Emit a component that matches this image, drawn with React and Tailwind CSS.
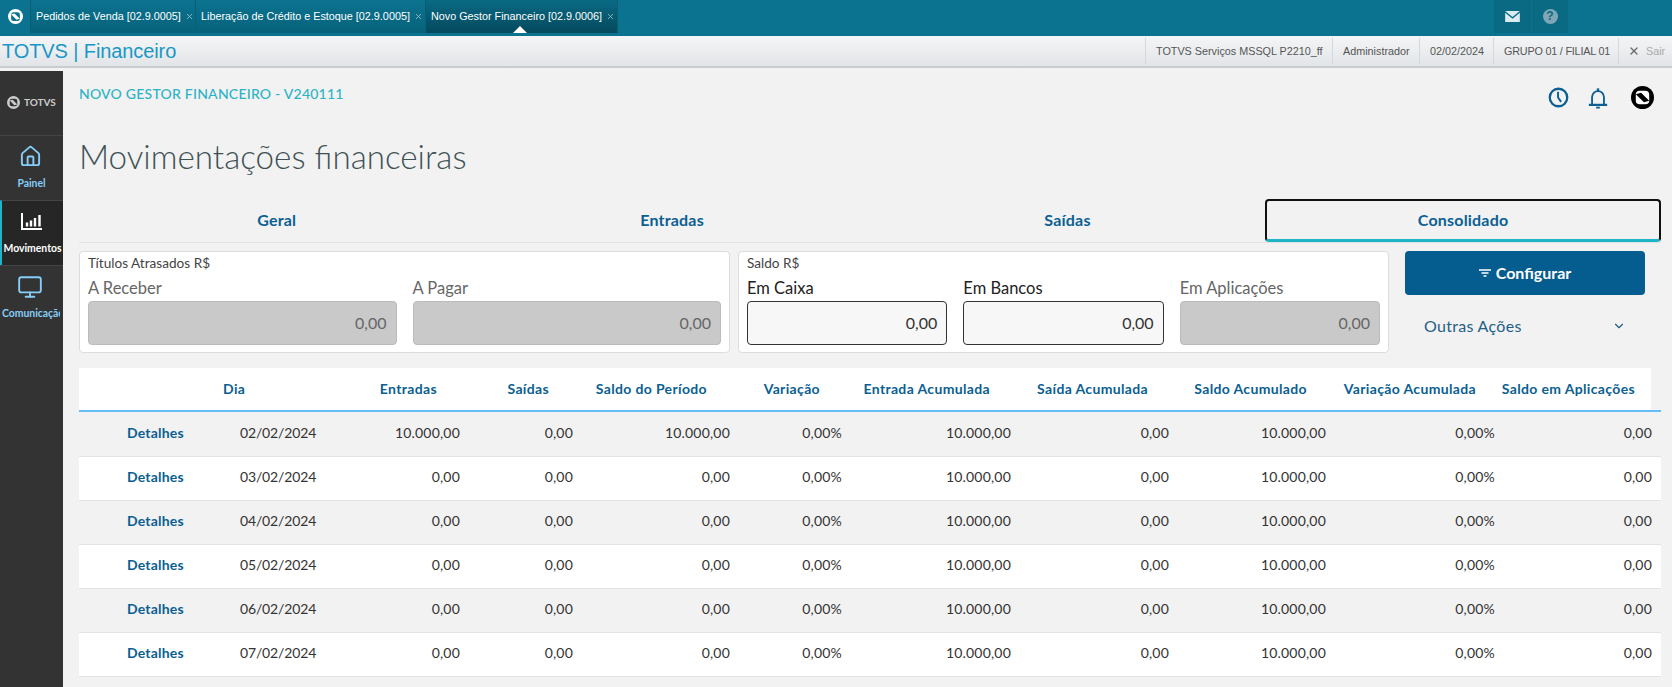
import React from "react";
import { House, Monitor, X, ChevronDown } from "lucide-react";

const tabs = [
  { label: "Pedidos de Venda [02.9.0005]", width: "w-[165px]" },
  { label: "Liberação de Crédito e Estoque [02.9.0005]", width: "w-[230px]" },
  { label: "Novo Gestor Financeiro [02.9.0006]", width: "w-[192px]", active: true },
];

const infoCells = [
  { text: "TOTVS Serviços MSSQL P2210_ff", width: "w-[187px]" },
  { text: "Administrador", width: "w-[87px]" },
  { text: "02/02/2024", width: "w-[74px]" },
  { text: "GRUPO 01 / FILIAL 01", width: "w-[125px]", tight: true },
];

const headers = ["Entradas", "Saídas", "Saldo do Período", "Variação", "Entrada Acumulada", "Saída Acumulada", "Saldo Acumulado", "Variação Acumulada", "Saldo em Aplicações"];

const rows = [
  { day: "02/02/2024", in: "10.000,00", saldo: "10.000,00" },
  { day: "03/02/2024", in: "0,00", saldo: "0,00" },
  { day: "04/02/2024", in: "0,00", saldo: "0,00" },
  { day: "05/02/2024", in: "0,00", saldo: "0,00" },
  { day: "06/02/2024", in: "0,00", saldo: "0,00" },
  { day: "07/02/2024", in: "0,00", saldo: "0,00" },
];

const TotvsLogo = ({ className, ring = "#000", inner = "#fff" }) => (
  <svg viewBox="0 0 24 24" className={className}>
    <circle cx="12" cy="12" r="12" fill={ring} />
    <rect x="5" y="5" width="14" height="14" rx="4" fill={inner} />
    <path d="M5 8.5 L10.5 7 L19 15.5 L13.5 17 Z" fill={ring} />
  </svg>
);

const BarsIcon = ({ className }) => (
  <svg viewBox="0 0 21 17" className={className} fill="none" stroke="currentColor" strokeWidth="2">
    <path d="M1 0v16h20" />
    <path d="M6 9.5v4M10 7.5v6M14 5v8.5M18.5 2v11.5" strokeWidth="2.4" />
  </svg>
);

const MailIcon = ({ className }) => (
  <svg viewBox="0 0 16 12" className={className}>
    <path d="M0 0h16L8 6.5z" fill="#dcecf1" />
    <path d="M0 2v10h16V2L8 8.5z" fill="#dcecf1" />
  </svg>
);

const ClockIcon = ({ className }) => (
  <svg viewBox="0 0 24 24" className={className} fill="none" stroke="currentColor" strokeWidth="2.6">
    <circle cx="12" cy="12" r="10" />
    <path d="M11.5 5.5V12l3.5 5" strokeWidth="2.2" />
  </svg>
);

const BellIcon = ({ className }) => (
  <svg viewBox="0 0 24 24" className={className} fill="none" stroke="currentColor" strokeWidth="2">
    <path d="M5.5 18.5V11a6.5 6.5 0 0 1 13 0v7.5" />
    <path d="M12 1.5v3" strokeWidth="2.6" />
    <path d="M2 19.5h20" strokeWidth="2.4" />
    <path d="M10 22.5h4" strokeWidth="2" />
  </svg>
);

const Field = ({ label, disabled }) => (
  <div className="flex-1">
    <div className={`h-[25px] text-[16.5px] leading-[24px] ${disabled ? "text-[#666]" : "text-[#222]"}`}>{label}</div>
    <div className={`h-[44px] rounded border flex items-center justify-end pr-[9px] text-[16px] ${disabled ? "bg-[#c9c9c9] border-[#bbb] text-[#666]" : "bg-[#f7f7f7] border-[#333] text-[#333]"}`}>
      0,00
    </div>
  </div>
);

const Panel = ({ title, children }) => (
  <div className="w-[651px] h-[102px] bg-white border border-[#ddd] rounded px-2">
    <div className="h-[24px] text-[13.6px] leading-[23px] text-[#444]">{title}</div>
    <div className="flex gap-4">{children}</div>
  </div>
);

const SideItem = ({ icon, label, active, clip }) => (
  <div className={`h-[65px] border-t border-[#444] flex flex-col items-center overflow-hidden ${active ? "bg-[#262626] border-l-2 border-l-[#1fb5c9] text-white" : "text-[#86cdf7]"}`}>
    <div className="h-[39px] flex items-center justify-center pr-[3px] mt-px">{icon}</div>
    <div className={`text-[10.4px] font-bold leading-[14px] whitespace-nowrap ${clip ? "w-[60px] pl-[2px] text-left self-start overflow-hidden" : "w-full text-center"}`}>{label}</div>
  </div>
);

export default function App() {
  return (
    <div className="h-screen overflow-hidden bg-[#f2f2f2] flex flex-col font-['Lato',sans-serif]">
      {/* barra do smartclient */}
      <div className="h-[36px] shrink-0 bg-[#0b7390] flex font-['Liberation_Sans',sans-serif]">
        <div className="w-[31px] h-[33px] flex items-center justify-center border-r border-[#086077]">
          <TotvsLogo className="w-[15px] h-[15px]" ring="#fff" inner="#0b7390" />
        </div>
        {tabs.map((t) => (
          <div
            key={t.label}
            className={`${t.width} h-[33px] relative flex items-center pl-[5px] border-r border-[#086077] text-[10.8px] ${t.active ? "bg-gradient-to-b from-[#0a6a84] to-[#04495d] text-white" : "bg-gradient-to-b from-[#0b7390] to-[#07627b] text-white"}`}
          >
            <span className="whitespace-nowrap">{t.label}</span>
            <X className="w-[9px] h-[9px] ml-[4px] text-[#a9c9d4]" />
            {t.active && <div className="absolute left-[87px] bottom-0 w-0 h-0 border-l-[7px] border-r-[7px] border-b-[7px] border-l-transparent border-r-transparent border-b-white" />}
          </div>
        ))}
        <div className="ml-auto mr-[104px] flex gap-px">
          <div className="w-[37px] h-[33px] bg-[#0a6a84] flex items-center justify-center">
            <MailIcon className="w-[15px] h-[11px]" />
          </div>
          <div className="w-[36px] h-[33px] bg-[#0a6a84] flex items-center justify-center">
            <div className="w-[15px] h-[15px] rounded-full bg-[#7fa6b4] text-[#0a6a84] text-[12px] font-bold leading-[15px] text-center">?</div>
          </div>
        </div>
      </div>

      {/* barra do modulo */}
      <div className="h-[32px] shrink-0 bg-gradient-to-b from-[#f4f5f6] to-[#e2e5e8] border-b-2 border-[#c8cdd1] flex items-center justify-between font-['Liberation_Sans',sans-serif]">
        <div className="pl-[2px] text-[20px] tracking-[-0.1px] text-[#1a97c6] whitespace-nowrap">TOTVS | Financeiro</div>
        <div className="flex items-center h-[26px] text-[10.8px] text-[#555]">
          {infoCells.map((c) => (
            <div key={c.text} className={`${c.width} h-full flex items-center pl-[10px] border-l border-[#d5d8db] whitespace-nowrap ${c.tight ? "tracking-[-0.2px]" : ""}`}>{c.text}</div>
          ))}
          <div className="w-[54px] h-full flex items-center pl-[9px] border-l border-[#d5d8db] text-[#aaa] whitespace-nowrap">
            <X className="w-[12px] h-[12px] text-[#666] mr-[6px] shrink-0" strokeWidth={2.5} />
            Sair
          </div>
        </div>
      </div>

      <div className="flex-1 flex mt-[3px] min-h-0">
        {/* menu lateral */}
        <div className="w-[63px] shrink-0 bg-[#333]">
          <div className="h-[64px] flex items-center pl-[7px] gap-[4px] pb-[1px]">
            <TotvsLogo className="w-[13px] h-[13px]" ring="#ccc" inner="#333" />
            <span className="text-[10px] font-bold text-[#ccc]">TOTVS</span>
          </div>
          <SideItem label="Painel" icon={<House className="w-[23px] h-[23px]" strokeWidth={2} />} />
          <SideItem label="Movimentos" active icon={<BarsIcon className="w-[21px] h-[17px]" />} />
          <SideItem label="Comunicação" clip icon={<Monitor className="w-[26px] h-[26px]" strokeWidth={1.75} />} />
        </div>

        {/* conteudo */}
        <div className="flex-1 pl-4 pr-[11px] min-w-0">
          <div className="h-[50px] flex items-start justify-between">
            <div className="mt-[14px] text-[14px] leading-[18px] font-medium text-[#2bb3c6] tracking-[0.23px]">NOVO GESTOR FINANCEIRO - V240111</div>
            <div className="flex items-center mt-[15px] mr-[7px]">
              <ClockIcon className="w-[21px] h-[21px] text-[#0b5f92]" />
              <BellIcon className="w-[22px] h-[22px] ml-[18px] text-[#0b5f92]" />
              <TotvsLogo className="w-[23px] h-[23px] ml-[22px]" />
            </div>
          </div>

          <h1 className="h-[78px] pb-[6px] flex items-center text-[33.2px] font-light text-[#3f5155]">Movimentações financeiras</h1>

          <div className="h-[44px] flex border-b border-[#e2e2e2]">
            {["Geral", "Entradas", "Saídas"].map((t) => (
              <div key={t} className="w-[395.4px] pb-[1px] flex items-center justify-center text-[16px] tracking-[0.2px] font-bold text-[#0b5f92]">{t}</div>
            ))}
            <div className="flex-1 border-2 border-[#111] rounded-sm border-b-[3px] border-b-[#1fb5c9] flex items-center justify-center text-[16px] tracking-[0.2px] font-bold text-[#0b5f92]">Consolidado</div>
          </div>

          <div className="flex mt-2">
            <Panel title="Títulos Atrasados R$">
              <Field label="A Receber" disabled />
              <Field label="A Pagar" disabled />
            </Panel>
            <div className="ml-2">
              <Panel title="Saldo R$">
                <Field label="Em Caixa" />
                <Field label="Em Bancos" />
                <Field label="Em Aplicações" disabled />
              </Panel>
            </div>
            <div className="ml-[16px] w-[240px]">
              <div className="h-[44px] rounded bg-[#055c8f] text-white flex items-center justify-center gap-[5px] text-[16px] font-bold">
                <svg viewBox="0 0 12 8" className="w-[12px] h-[8px]" stroke="currentColor" strokeWidth="1.3">
                  <path d="M0 1h12M2.5 4h7M4.5 7h3" />
                </svg>
                Configurar
              </div>
              <div className="h-[34px] mt-[14px] flex items-center justify-between pl-[19px] pr-[19px] text-[16px] text-[#1f5f87] tracking-[0.3px]">
                Outras Ações
                <ChevronDown className="w-[14px] h-[14px]" />
              </div>
            </div>
          </div>

          {/* tabela */}
          <div className="mt-[15px]">
            <div className="w-[1572px] h-[42px] pb-[2px] bg-white grid grid-cols-[144px_21px_193px_112px_158px_113px_170px_158px_159px_169px_159px_16px] items-center text-[14px] font-bold text-[#0b5f92] tracking-[0.35px]">
              <div />
              <div>Dia</div>
              {headers.map((h) => (
                <div key={h} className="text-right whitespace-nowrap">{h}</div>
              ))}
            </div>
            <div className="h-[2px] bg-[#64bdf4]" />
            {rows.map((r, i) => (
              <div
                key={r.day}
                className={`${i === 0 ? "h-[45px]" : "h-[44px]"} pb-[4px] border-b border-[#e3e3e3] grid grid-cols-[161px_75px_145px_113px_157px_112px_169px_158px_157px_169px_157px_9px] items-center text-[14px] text-[#333] tracking-[0.2px] ${i % 2 === 0 ? "bg-[#f2f2f2]" : "bg-white"}`}
              >
                <div className="pl-[48px] font-bold text-[#0b5f92]">Detalhes</div>
                <div className="whitespace-nowrap tracking-[-0.15px]">{r.day}</div>
                <div className="text-right">{r.in}</div>
                <div className="text-right">0,00</div>
                <div className="text-right">{r.saldo}</div>
                <div className="text-right">0,00%</div>
                <div className="text-right">10.000,00</div>
                <div className="text-right">0,00</div>
                <div className="text-right">10.000,00</div>
                <div className="text-right">0,00%</div>
                <div className="text-right">0,00</div>
              </div>
            ))}
          </div>
        </div>
      </div>
    </div>
  );
}
